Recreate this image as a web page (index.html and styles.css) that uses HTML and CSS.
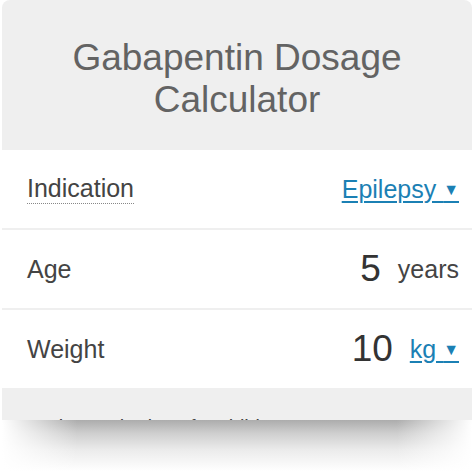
FILE: index.html
```html
<!DOCTYPE html>
<html lang="en">
<head>
  <meta charset="UTF-8">
  <meta name="viewport" content="width=device-width, initial-scale=1.0">
  <title>Gabapentin Dosage Calculator</title>
  <link rel="stylesheet" href="styles.css">
</head>
<body>
  <div class="page">
    <div class="calculator">
      <h1 class="calc-title">Gabapentin Dosage Calculator</h1>

      <div class="calc-row">
        <span class="calc-label calc-label-hint">Indication</span>
        <span class="calc-value">
          <a class="calc-select" href="#">Epilepsy <span class="caret">▼</span></a>
        </span>
      </div>

      <div class="calc-row">
        <span class="calc-label">Age</span>
        <span class="calc-value">
          <span class="calc-number">5</span>
          <span class="calc-unit">years</span>
        </span>
      </div>

      <div class="calc-row">
        <span class="calc-label">Weight</span>
        <span class="calc-value">
          <span class="calc-number">10</span>
          <a class="calc-select" href="#">kg <span class="caret">▼</span></a>
        </span>
      </div>

      <!-- result text, cut off by the card -->
      <p class="calc-note">Gabapentin dose for children 3–12 years: 10–15 mg/kg/day in three doses</p>
    </div>
    <div class="card-shadow"></div>
  </div>
</body>
</html>
```

FILE: styles.css
```css
html, body {
  margin: 0;
  background: #fff;
  font-family: "Liberation Sans", Arial, sans-serif;
}

.page {
  min-height: 474px;
}

.calculator {
  margin: 0 2px;
  height: 420px;
  overflow: hidden;
  background: #efefef;
  border-radius: 8px 8px 0 0;
  display: flex;
  flex-direction: column;
  gap: 2px;
}

/* soft shadow fading out under the card */
.card-shadow {
  height: 54px;
  margin: 0 2px;
  background:
    linear-gradient(to right, #fff 0%, rgba(255, 255, 255, 0) 16%, rgba(255, 255, 255, 0) 84%, #fff 100%),
    linear-gradient(to bottom, #acacac 0%, #cfcfcf 25%, #ebebeb 55%, #fff 95%);
}

.calc-title {
  margin: 0;
  padding: 37px 20px 29px;
  font-size: 37px;
  line-height: 42px;
  font-weight: normal;
  text-align: center;
  color: #636363;
}

.calc-row {
  flex: none;
  height: 78px;
  display: flex;
  align-items: center;
  justify-content: space-between;
  padding: 0 13px 0 25px;
  background: #fff;
}

.calc-row:first-of-type {
  margin-top: -2px;
}

.calc-label {
  font-size: 25px;
  color: #444;
}

.calc-label-hint {
  border-bottom: 1px dotted #888;
  line-height: 1.15;
}

.calc-value {
  display: flex;
  align-items: center;
  gap: 17px;
}

.calc-number {
  font-size: 37px;
  color: #333;
}

.calc-unit {
  font-size: 25px;
  color: #444;
}

.calc-select {
  font-size: 25px;
  color: #1b80b4;
  text-decoration: underline;
  text-decoration-thickness: 2px;
  text-underline-offset: 3px;
}

.caret {
  font-size: 16px;
  vertical-align: 3px;
}

.calc-note {
  margin: 0;
  padding: 23px 30px 0;
  font-size: 20px;
  line-height: 28px;
  color: #444;
  white-space: nowrap;
}
```
